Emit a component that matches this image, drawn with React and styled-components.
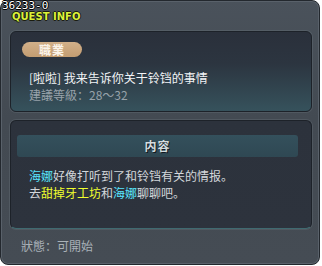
import React from "react";
import styled, { createGlobalStyle } from "styled-components";

const Global = createGlobalStyle`
  html, body { margin: 0; padding: 0; background: #ffffff; }
  body { font-family: "Noto Sans CJK SC", "Noto Sans", sans-serif; }
`;

const Window = styled.div`
  position: relative;
  box-sizing: border-box;
  width: 320px;
  height: 265px;
  padding: 0 7px 0 9px;
  display: flex;
  flex-direction: column;
  border-radius: 8px;
  border: 1px solid #23282e;
  box-shadow: inset 0 0 0 1px #59616a;
  background: linear-gradient(180deg, #4a525b 0%, #434a52 45%, #454c54 100%);
`;

const IdLabel = styled.div`
  position: absolute;
  left: 1px;
  top: -1px;
  font-family: "DejaVu Sans Mono", monospace;
  font-size: 11px;
  line-height: 11px;
  color: #ffffff;
  text-shadow: 1px 0 0 #000, -1px 0 0 #000, 0 1px 0 #000, 0 -1px 0 #000;
`;

const TitleBar = styled.div`
  height: 30px;
  padding: 10px 0 0 2px;
  box-sizing: border-box;
  font-family: "DejaVu Sans", sans-serif;
  font-weight: bold;
  font-size: 10px;
  line-height: 11px;
  color: #dcf23a;
  text-shadow: 1px 0 0 #1a1c10, -1px 0 0 #1a1c10, 0 1px 0 #1a1c10, 0 -1px 0 #1a1c10;
`;

const Panel = styled.div`
  box-sizing: border-box;
  height: ${(p) => p.$h}px;
  border-radius: 6px;
  border: 1px solid #1d2229;
  box-shadow: 0 0 0 1px rgba(120, 130, 140, 0.25);
  background: ${(p) => p.$bg};
  display: flex;
  flex-direction: column;
`;

const QuestPanel = styled(Panel)`
  padding: 10px 12px 0 11px;
`;

const ContentPanel = styled(Panel)`
  margin-top: 8px;
  padding: 14px 13px 0 6px;
  border-bottom-color: #3f6a70;
`;

const Badge = styled.div`
  width: 60px;
  height: 15px;
  border-radius: 8px;
  background: linear-gradient(180deg, #d2b089 0%, #c39d72 100%);
  color: #fbf4ea;
  font-weight: bold;
  font-size: 12px;
  line-height: 15px;
  text-align: center;
  letter-spacing: 1px;
`;

const QuestTitle = styled.div`
  margin-top: 14px;
  padding-left: 7px;
  font-size: 12px;
  line-height: 14px;
  color: #f2f4f6;
`;

const Level = styled.div`
  margin-top: 3px;
  padding-left: 7px;
  font-size: 12px;
  line-height: 14px;
  color: #98a2aa;
`;

const SectionHeader = styled.div`
  height: 22px;
  border-radius: 3px;
  background: linear-gradient(180deg, #34505c 0%, #2f4853 100%);
  color: #d4dcdf;
  font-weight: bold;
  font-size: 12px;
  line-height: 22px;
  text-align: center;
  letter-spacing: 1px;
  text-shadow: 1px 1px 0 #111820;
`;

const Body = styled.div`
  margin-top: 10px;
  padding-left: 12px;
  font-size: 12px;
  line-height: 17px;
  color: #d3d7db;
`;

const Hl = styled.span`
  color: ${(p) => (p.$kind === "place" ? "#f0ff2e" : "#58e6ff")};
`;

const Status = styled.div`
  margin-top: 10px;
  padding-left: 11px;
  font-size: 12px;
  line-height: 14px;
  color: #a9b1b8;
`;

export default function App() {
  return (
    <>
      <Global />
      <Window>
        <IdLabel>36233-0</IdLabel>
        <TitleBar>QUEST INFO</TitleBar>
        <QuestPanel $h={81} $bg="linear-gradient(180deg, #2a303b 0%, #2c3540 40%, #36525c 100%)">
          <Badge>職業</Badge>
          <QuestTitle>[啦啦] 我来告诉你关于铃铛的事情</QuestTitle>
          <Level>建議等級：28～32</Level>
        </QuestPanel>
        <ContentPanel $h={109} $bg="linear-gradient(180deg, #2c323c 0%, #2d333d 100%)">
          <SectionHeader>内容</SectionHeader>
          <Body>
            <Hl>海娜</Hl>好像打听到了和铃铛有关的情报。
            <br />
            去<Hl $kind="place">甜掉牙工坊</Hl>和<Hl>海娜</Hl>聊聊吧。
          </Body>
        </ContentPanel>
        <Status>狀態：可開始</Status>
      </Window>
    </>
  );
}
